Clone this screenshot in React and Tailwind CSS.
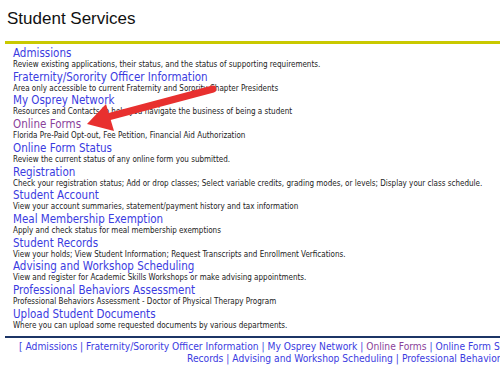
const services = [
  { title: 'Admissions', desc: 'Review existing applications, their status, and the status of supporting requirements.' },
  { title: 'Fraternity/Sorority Officer Information', desc: 'Area only accessible to current Fraternity and Sorority Chapter Presidents' },
  { title: 'My Osprey Network', desc: 'Resources and Contacts to help you navigate the business of being a student' },
  { title: 'Online Forms', desc: 'Florida Pre-Paid Opt-out, Fee Petition, Financial Aid Authorization', visited: true },
  { title: 'Online Form Status', desc: 'Review the current status of any online form you submitted.' },
  { title: 'Registration', desc: 'Check your registration status; Add or drop classes; Select variable credits, grading modes, or levels; Display your class schedule.' },
  { title: 'Student Account', desc: 'View your account summaries, statement/payment history and tax information' },
  { title: 'Meal Membership Exemption', desc: 'Apply and check status for meal membership exemptions' },
  { title: 'Student Records', desc: 'View your holds; View Student Information; Request Transcripts and Enrollment Verfications.' },
  { title: 'Advising and Workshop Scheduling', desc: 'View and register for Academic Skills Workshops or make advising appointments.' },
  { title: 'Professional Behaviors Assessment', desc: 'Professional Behaviors Assessment - Doctor of Physical Therapy Program' },
  { title: 'Upload Student Documents', desc: 'Where you can upload some requested documents by various departments.' },
];

const linkColor = (s) => (s.visited ? 'text-[#8a3f9a]' : 'text-[#3b3bdf]');

const FooterLink = ({ item, last }) => (
  <>
    <a href="#" className={linkColor(item)}>{item.title}</a>
    {!last && <span className="text-[#3b3bdf]"> | </span>}
  </>
);

export default function App() {
  const lineOne = services.slice(0, 5);
  return (
    <div
      className="relative w-[500px] h-[370px] overflow-hidden bg-white"
      style={{ fontFamily: '"DejaVu Sans Condensed", "DejaVu Sans", sans-serif' }}
    >
      <h1
        className="pl-[7px] pt-[8px] text-[17px] leading-[21px] text-[#111]"
        style={{ fontFamily: '"Liberation Sans", Arial, sans-serif' }}
      >
        Student Services
      </h1>

      <div className="ml-[5px] mt-[12px] h-[3px] bg-[#c9c900]" />

      <div className="pl-[13px] pt-[3px]">
        {services.map((s) => (
          <div key={s.title}>
            <a href="#" className={`block text-[11.5px] leading-[13px] ${linkColor(s)}`}>
              {s.title}
            </a>
            <p className="text-[8px] leading-[10.7px] text-[#222] whitespace-nowrap">{s.desc}</p>
          </div>
        ))}
      </div>

      <div className="ml-[5px] mt-[5px] h-[2px] bg-[#1c3566]" />

      <div className="pt-[3px] text-[10.2px] leading-[12px] whitespace-nowrap">
        <div className="pl-[19px]">
          <span className="text-[#3b3bdf]">[ </span>
          {lineOne.map((s) => (
            <FooterLink key={s.title} item={s} />
          ))}
          <span className="text-[#3b3bdf]">Registration | Student Account | Meal Membership Exemption | Student</span>
        </div>
        <div className="pl-[187px]">
          <a href="#" className="text-[#3b3bdf]">Records</a>
          <span className="text-[#3b3bdf]"> | </span>
          {services.slice(9).map((s, i, arr) => (
            <FooterLink key={s.title} item={s} last={i === arr.length - 1} />
          ))}
          <span className="text-[#3b3bdf]"> ]</span>
        </div>
      </div>

      {/* red annotation arrow */}
      <svg className="absolute left-0 top-0" width="500" height="370" viewBox="0 0 500 370">
        <line x1="213" y1="89" x2="104" y2="118" stroke="#e8302f" strokeWidth="7" strokeLinecap="round" />
        <polygon points="87,124 106,104 114,131" fill="#e8302f" />
      </svg>
    </div>
  );
}
